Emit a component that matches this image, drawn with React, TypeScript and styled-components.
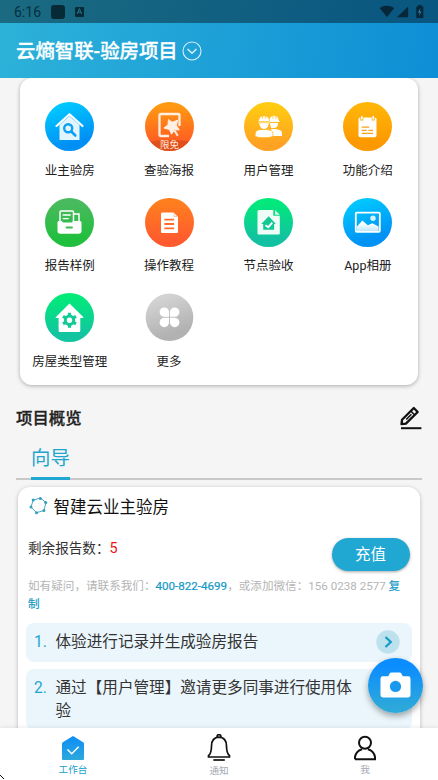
import React from 'react';
import styled, { createGlobalStyle } from 'styled-components';

const Global = createGlobalStyle`
  * { box-sizing: border-box; }
  html, body { margin: 0; padding: 0; overflow: hidden; }
  body { font-family: Roboto, "Noto Sans CJK SC", sans-serif; background: #f5f5f5; color: #222; }
  svg { display: block; flex: none; }
`;

const Screen = styled.div`
  position: relative;
  width: 438px;
  height: 780px;
  overflow: hidden;
  display: flex;
  flex-direction: column;
  background: #f5f5f5;
`;

const Top = styled.div`
  flex: none;
  background: linear-gradient(100deg, #2db2d9, #0e8ed5);
`;

const StatusBar = styled.div`
  height: 23px;
  display: flex;
  align-items: center;
  padding: 1px 14px 0;
  background: rgba(0, 0, 0, 0.4);
  color: #06303e;
  font-size: 14px;
  line-height: 22px;
  letter-spacing: 0;
`;

const Clock = styled.span`
  width: 37px;
`;

const StatusRight = styled.div`
  margin-left: auto;
`;

const Header = styled.header`
  height: 55px;
  padding: 1px 16px 0;
  display: flex;
  align-items: center;
  gap: 4px;
  color: #fff;
`;

const AppTitle = styled.h1`
  margin: 0;
  padding-top: 2px;
  font-size: 19.4px;
  font-weight: 500;
  line-height: 30px;
  -webkit-text-stroke: 0.3px currentColor;
`;

const Main = styled.main`
  flex: 1;
  min-height: 0;
  overflow: hidden;
`;

const ToolCard = styled.section`
  margin: 0 20.5px 0 20px;
  height: 307px;
  padding-top: 24px;
  background: #fff;
  border-radius: 12px;
  box-shadow: 0 1px 4px rgba(0, 0, 0, 0.3);
  display: grid;
  grid-template-columns: repeat(4, 1fr);
  grid-auto-rows: 95.7px;
`;

const Tool = styled.div`
  display: flex;
  flex-direction: column;
  align-items: center;
`;

const ToolLabel = styled.span`
  margin-top: 9.5px;
  font-size: 12.5px;
  line-height: 19px;
  white-space: nowrap;
  color: #222;
`;

const SectionHead = styled.div`
  margin: 20px 16px 0;
  height: 26px;
  display: flex;
  align-items: center;
  justify-content: space-between;
`;

const SectionTitle = styled.h2`
  margin: 0;
  padding-top: 1px;
  font-size: 16.4px;
  font-weight: 500;
  line-height: 24px;
  color: #222;
  -webkit-text-stroke: 0.3px currentColor;
`;

const Tabs = styled.div`
  margin: 0 16px;
  height: 49px;
  padding: 11px 15px 0;
  border-bottom: 2px solid #c8c8c8;
`;

const Tab = styled.div`
  width: 39px;
  height: 38px;
  padding-top: 1px;
  font-size: 19.4px;
  line-height: 31px;
  color: #20a5cf;
  border-bottom: 3px solid #20a8d2;
  white-space: nowrap;
`;

const ProjectCard = styled.section`
  margin: 7px 18.5px 0 18px;
  height: 300px;
  padding: 0 8px;
  background: #fff;
  border-radius: 12px;
  box-shadow: 0 1px 4px rgba(0, 0, 0, 0.25);
`;

const ProjectTitle = styled.div`
  display: flex;
  align-items: center;
  gap: 6px;
  height: 40px;
  padding-left: 2.5px;
  font-size: 16.5px;
  line-height: 24px;
  color: #111;
`;

const ProjectName = styled.span`
  padding-top: 2px;
`;

const Balance = styled.div`
  display: flex;
  align-items: flex-start;
  justify-content: space-between;
  height: 50px;
  padding: 11px 2px 0;
  font-size: 13.6px;
  line-height: 20px;
  color: #333;
`;

const Count = styled.span`
  font-size: 14.4px;
  color: #f01212;
`;

const Recharge = styled.button`
  width: 78px;
  height: 33px;
  padding: 1px 0 0;
  border: 0;
  border-radius: 17px;
  background: #20a8d2;
  color: #fff;
  font: 15.5px/33px Roboto, "Noto Sans CJK SC", sans-serif;
  box-shadow: 0 1px 3px rgba(0, 0, 0, 0.35);
`;

const Contact = styled.p`
  margin: 0;
  padding: 0 9px 0 2px;
  height: 46px;
  font-size: 11.6px;
  line-height: 18px;
  color: #b5b5b5;
`;

const Link = styled.span`
  color: #159ac5;
  -webkit-text-stroke: 0.2px currentColor;
`;

const Guide = styled.div`
  display: flex;
  align-items: flex-start;
  min-height: 39px;
  margin-bottom: 7px;
  padding: 8px 12px 7px 8px;
  border-radius: 8px;
  background: #eaf6fb;
  font-size: 15.6px;
  line-height: 23px;
  color: #333;
`;

const GuideNo = styled.span`
  flex: none;
  width: 21.5px;
  color: #20a5cf;
`;

const GuideText = styled.span`
  flex: none;
  width: 300px;
`;

const Chevron = styled.svg`
  margin: -1px 0 0 auto;
`;

const Fab = styled.button`
  position: absolute;
  left: 368px;
  top: 658px;
  width: 55px;
  height: 55px;
  padding: 0 0 1px;
  border: 0;
  border-radius: 50%;
  display: grid;
  place-items: center;
  background: linear-gradient(#0b8cff 12%, #2ca8da 88%);
  box-shadow: 0 3px 6px rgba(0, 0, 0, 0.35);
`;

const Nav = styled.nav`
  flex: none;
  height: 52px;
  display: grid;
  grid-template-columns: repeat(3, 1fr);
  background: #fff;
  box-shadow: 0 -1px 4px rgba(0, 0, 0, 0.08);
  z-index: 1;
`;

const NavItem = styled.div<{ $active?: boolean }>`
  display: flex;
  flex-direction: column;
  align-items: center;
  padding-top: 6px;
  font-size: 9.6px;
  line-height: 14px;
  color: ${(p) => (p.$active ? '#20a0cc' : '#a5a9b3')};
`;

const NavLabel = styled.span<{ $low?: boolean }>`
  margin-top: ${(p) => (p.$low ? 1.5 : 0.5)}px;
`;

const Pointer = styled.svg`
  position: absolute;
  left: 0;
  top: 775px;
  z-index: 2;
`;

type IconProps = { id: string; from: string; to: string; slant?: boolean; small?: boolean; children: React.ReactNode };

const Disc = ({ id, from, to, slant, small, children }: IconProps) => (
  <svg width="49" height="49" viewBox="0 0 49 49">
    <defs>
      <linearGradient id={id} x1={slant ? '.25' : '.5'} y1="0" x2={slant ? '.6' : '.5'} y2="1">
        <stop offset=".1" stopColor={from} />
        <stop offset=".85" stopColor={to} />
      </linearGradient>
      <linearGradient id={`${id}w`} x1="0" y1="0" x2="0" y2="1">
        <stop offset=".3" stopColor="#fff" />
        <stop offset="1" stopColor="#fff" stopOpacity=".75" />
      </linearGradient>
      <clipPath id={`${id}c`}>
        <circle cx="24.5" cy="24.5" r="24.5" />
      </clipPath>
    </defs>
    <circle cx="24.5" cy={small ? 24.3 : 24.5} r={small ? 23.8 : 24.5} fill={`url(#${id})`} />
    {children}
  </svg>
);

const tools = [
  {
    label: '业主验房',
    icon: (
      <Disc id="a" from="#00c6ff" to="#0090f5" slant>
        <path d="M14.5 23 24.5 14 34.5 23V38H14.5Z" fill="#e2f4fe" />
        <path d="M11.5 24 24.5 12.3 37.5 24" fill="none" stroke="#fff" strokeWidth="2.2" strokeLinecap="round" strokeLinejoin="round" />
        <circle cx="23.2" cy="26.3" r="4" fill="none" stroke="#0da0f4" strokeWidth="2.4" />
        <path d="m26.3 29.5 4 4" stroke="#0da0f4" strokeWidth="2.6" strokeLinecap="round" />
      </Disc>
    ),
  },
  {
    label: '查验海报',
    icon: (
      <Disc id="b" from="#ff9812" to="#ff5a24">
        <path d="M0 40Q24.5 36 49 40V49H0Z" fill="#d44e1a" opacity=".75" clipPath="url(#bc)" />
        <path d="M24 34H16Q14.5 34 14.5 32.5V13.5Q14.5 12 16 12H33Q34.5 12 34.5 13.5V24" fill="none" stroke="#ffefe3" strokeWidth="2.3" />
        <path d="m23.5 17.5 3.7 2.8 5.3-2-1.1 5.2 2.9 4.4-4.9-.1-2.8 4.4-2.2-4.8-5.5-1.4 4.1-3.1Z" fill="#fff0e6" stroke="#fff0e6" strokeWidth="1" strokeLinejoin="round" />
        <path d="m29.5 28.5 3.2 5.3" stroke="#fff0e6" strokeWidth="2" />
        <text x="24.5" y="46.3" textAnchor="middle" fontSize="9.5" fill="#ffe6d6">限免</text>
      </Disc>
    ),
  },
  {
    label: '用户管理',
    icon: (
      <Disc id="c" from="#ffca12" to="#ffa223">
        <g fill="#fff">
          <path d="M25 18.5Q26 14 30 13.8 34.3 14 34.8 18.5L36 20H25Z" />
          <path d="M26 21H34Q34 25.5 30.5 26H27Z" />
          <path d="M27 27H31Q38 27.5 38 31V34H27Z" />
          <path d="M14.5 19.5Q14.5 14 20 13.8 25.5 14 25.5 19.5Z" stroke="#ffbd17" strokeWidth=".7" />
          <path d="M14 19.8H26V21H14Z" />
          <path d="M15.3 21H24.8Q24.6 26.6 20 27 15.6 26.6 15.3 21Z" />
          <path d="M11.2 33.5V31.5Q11.5 27.5 18 27.5H22Q28.8 27.5 29 31.5V33.5Q28.8 35.7 20 35.7 11.4 35.7 11.2 33.5Z" stroke="#ffb41e" strokeWidth=".8" />
        </g>
        <path d="M14 20.7h11.8M26 20.5h9.5M18.4 14v3M21.8 14v3M29 14v3M31.8 14v3" stroke="#ffbb18" strokeWidth=".7" />
      </Disc>
    ),
  },
  {
    label: '功能介绍',
    icon: (
      <Disc id="d" from="#ffb408" to="#fc9800">
        <rect x="15.5" y="15.6" width="18" height="19.6" rx="1.7" fill="#fff" />
        <path d="M18.8 14.5v4M30.2 14.5v4" stroke="#ffae08" strokeWidth="3" />
        <path d="M18.8 14v3.6M30.2 14v3.6" stroke="#fff" strokeWidth="1.6" />
        <path d="M18.7 25.2h7.5M18.7 28.3h5M25.5 28.3h4.5M18.7 31.4h11.4" stroke="#f8a119" strokeWidth="1.3" />
      </Disc>
    ),
  },
  {
    label: '报告样例',
    icon: (
      <Disc id="e" from="#4aba5e" to="#20bf3d">
        <path d="M15 24V14Q15 13 16 13H27.5Q28.5 13 28.5 14V24M29 16H34V25" fill="none" stroke="#fff" strokeWidth="1.5" />
        <path d="M17.7 17h8M17.7 20.7h6" stroke="#fff" strokeWidth="1.3" />
        <path d="M13.5 23H17L18 24.5H27L28 23H35Q36.5 23 36.5 24.7V33Q36.5 35.8 33.5 35.8H15.5Q12.5 35.8 12.5 33V24.5Q12.5 23 13.5 23Z" fill="#fff" />
        <path d="M21.5 29.5H27" stroke="#3cbe51" strokeWidth="1.8" strokeLinecap="round" />
      </Disc>
    ),
  },
  {
    label: '操作教程',
    icon: (
      <Disc id="f" from="#ff7e1e" to="#ff5b2e">
        <path d="M17 14.5H28.5L33 18.7V34Q33 35 32 35H17Q16 35 16 34V15.5Q16 14.5 17 14.5Z" fill="#fff" />
        <path d="M29 14.8V18.5H32.8" stroke="#ffb48e" strokeWidth=".8" fill="none" />
        <path d="M19.3 21.7h9.8M19.3 26h9.8M19.3 30.4h9.8" stroke="#ff6d2a" strokeWidth="1.8" />
      </Disc>
    ),
  },
  {
    label: '节点验收',
    icon: (
      <Disc id="g" from="#02e97b" to="#13c0a2">
        <path d="M15 12H29.3V17.7H35.8V35.5Q35.8 36.5 34.8 36.5H14.5Q13.5 36.5 13.5 35.5V13.5Q13.5 12 15 12Z" fill="#effdf7" />
        <path d="M31 12v4.8h4.8Z" fill="#d6faeb" />
        <path d="m17.2 26 7.5-7.8 7.2 7.8h-1.8v5.8H19.2V26Z" fill="#12c995" />
        <path d="m21.5 27.2 2.8 2 4-4.6" fill="none" stroke="#fff" strokeWidth="1.8" />
      </Disc>
    ),
  },
  {
    label: 'App相册',
    icon: (
      <Disc id="h" from="#00c6ff" to="#0092f4" slant>
        <rect x="12.8" y="14.6" width="24" height="19.2" rx="1" fill="none" stroke="#fff" strokeWidth="1.8" />
        <circle cx="30" cy="20.3" r="2.7" fill="#d5f3ff" />
        <path d="m14 28.5 5.3-6 5.5 4.8 4.5-2 6.3 3.2v4.5H14Z" fill="url(#hw)" />
      </Disc>
    ),
  },
  {
    label: '房屋类型管理',
    icon: (
      <Disc id="i" from="#03e97a" to="#12c4a0">
        <path d="M24.5 10.6 38.5 24.2Q38.9 25 37.5 25H35.3V37.5Q35.3 39 34 39H15Q13.6 39 13.6 37.5V25H11.3Q10 25 10.7 24.2Z" fill="#fff" />
        <g stroke="#12cb95" fill="none">
          <circle cx="24.5" cy="27.2" r="4.2" strokeWidth="3" />
          <path d="M24.5 19.7v3M24.5 31.7v3M18 23.45l2.6 1.5M28.4 29.45l2.6 1.5M18 30.95l2.6-1.5M28.4 24.95l2.6-1.5" strokeWidth="3.2" />
        </g>
      </Disc>
    ),
  },
  {
    label: '更多',
    icon: (
      <Disc id="j" from="#d3d3d3" to="#b2b2b2" slant small>
        <g fill="#fff">
          <path d="M24 23.8H19.3A4.7 4.7 0 1 1 24 19.1Z" />
          <path d="M25 23.8H29.7A4.7 4.7 0 1 0 25 19.1Z" />
          <path d="M24 24.8H19.3A4.7 4.7 0 1 0 24 29.5Z" />
          <path d="M25 24.8H29.7A4.7 4.7 0 1 1 25 29.5Z" />
        </g>
      </Disc>
    ),
  },
];

export default function App() {
  return (
    <>
      <Global />
      <Screen>
        <Top>
          <StatusBar>
            <Clock>6:16</Clock>
            <svg width="34" height="16" viewBox="0 0 34 16">
              <rect x="0" y="1" width="14" height="14" rx="3" fill="#072b36" />
              <rect x="24" y="3" width="9" height="10" rx="1" fill="#072b36" />
              <path d="m26.2 10 2.2-5.3 2.2 5.3M27 8.2h2.8" stroke="#257894" fill="none" />
            </svg>
            <StatusRight>
              <svg width="45" height="16" viewBox="0 0 45 16" fill="#06263a">
                <path d="M.5 4Q7.6-.6 15.3 4L8 13Z" />
                <path d="M18 13.3 29.2 2.5V13.3Z" />
                <path d="M37.3 2.4H39V1h3.6v1.4h1.7V14H37.3Z" />
                <path d="m41.5 4-2.7 4.5h1.7L40 12l2.7-4.5H41Z" fill="#2e779d" />
              </svg>
            </StatusRight>
          </StatusBar>
          <Header>
            <AppTitle>云熵智联-验房项目</AppTitle>
            <svg width="20" height="20" viewBox="0 0 20 20" fill="none" stroke="#d9f0fa">
              <circle cx="10" cy="10" r="9" strokeWidth="1.1" />
              <path d="m5.5 8 4.5 4.3L14.5 8" strokeWidth="1.5" />
            </svg>
          </Header>
        </Top>
        <Main>
          <ToolCard>
            {tools.map((t) => (
              <Tool key={t.label}>
                {t.icon}
                <ToolLabel>{t.label}</ToolLabel>
              </Tool>
            ))}
          </ToolCard>
          <SectionHead>
            <SectionTitle>项目概览</SectionTitle>
            <svg width="22" height="24" viewBox="0 0 22 24" fill="none" stroke="#111">
              <path d="M1.5 18.2 2 13.8 13.8 2 17.7 6 5.9 17.6Z" strokeWidth="2.3" strokeLinejoin="round" />
              <path d="m10.8 5 3.9 4M6.2 13.5l5.2-5.2" strokeWidth="1.6" />
              <path d="M1 22.2h20.4" strokeWidth="2" />
            </svg>
          </SectionHead>
          <Tabs>
            <Tab>向导</Tab>
          </Tabs>
          <ProjectCard>
            <ProjectTitle>
              <svg width="19" height="21" viewBox="0 1 19 21" fill="#329fbd" stroke="#329fbd">
                <path d="M4.2 4.1 11.4 2 17 6.6 14.9 14.5 7.5 16.7 2 11Z" fill="none" strokeWidth=".9" />
                <g stroke="none">
                  <circle cx="4.2" cy="4.1" r="1.5" />
                  <circle cx="11.4" cy="2.5" r="1.5" />
                  <circle cx="16.7" cy="6.6" r="1.5" />
                  <circle cx="14.9" cy="14.5" r="1.5" />
                  <circle cx="7.5" cy="16.7" r="1.5" />
                  <circle cx="2" cy="11" r="1.5" />
                </g>
              </svg>
              <ProjectName>智建云业主验房</ProjectName>
            </ProjectTitle>
            <Balance>
              <span>剩余报告数：<Count>5</Count></span>
              <Recharge>充值</Recharge>
            </Balance>
            <Contact>
              如有疑问，请联系我们：<Link>400-822-4699</Link>，或添加微信：156 0238 2577 <Link>复制</Link>
            </Contact>
            <Guide>
              <GuideNo>1.</GuideNo>
              <GuideText>体验进行记录并生成验房报告</GuideText>
              <Chevron width="24" height="24" viewBox="0 0 24 24">
                <circle cx="12" cy="12" r="11.7" fill="#bde2ee" />
                <path d="m9.5 7 5.3 5-5.3 5" fill="none" stroke="#159ac5" strokeWidth="2.2" />
              </Chevron>
            </Guide>
            <Guide>
              <GuideNo>2.</GuideNo>
              <GuideText>通过【用户管理】邀请更多同事进行使用体验</GuideText>
            </Guide>
          </ProjectCard>
        </Main>
        <Nav>
          <NavItem $active>
            <svg width="24" height="28" viewBox="0 0 24 28">
              <defs>
                <linearGradient id="home" x1="0" y1="0" x2="0" y2="1">
                  <stop stopColor="#0c8df8" />
                  <stop offset="1" stopColor="#2da8db" />
                </linearGradient>
              </defs>
              <path d="M12 2 22.2 8.2Q23 8.7 23 9.7V25Q23 26 22 26H2Q1 26 1 25V9.7Q1 8.7 1.8 8.2Z" fill="url(#home)" />
              <path d="m6.5 15.5 4.2 4.2 7-7" fill="none" stroke="#fff" strokeWidth="1.5" />
            </svg>
            <NavLabel>工作台</NavLabel>
          </NavItem>
          <NavItem>
            <svg width="24" height="28" viewBox="0 0 24 28" fill="none" stroke="#111" strokeWidth="1.7">
              <circle cx="12" cy="2.5" r="1.9" />
              <path d="M12 3.2C7.2 3.4 4.6 7 4.5 12 4.5 18 3.5 20 1.5 21.7V23H22.5V21.7C20.5 20 19.5 18 19.5 12 19.4 7 16.8 3.4 12 3.2Z" fill="#fff" />
              <path d="M6.3 26h11.5" />
            </svg>
            <NavLabel $low>通知</NavLabel>
          </NavItem>
          <NavItem>
            <svg width="24" height="28" viewBox="0 0 24 28" fill="none" stroke="#111" strokeWidth="2">
              <circle cx="12" cy="8.8" r="6" />
              <path d="M2 25.2V23Q3 17 9 15.2M15 15.2Q21 17 22 23V25.2H2" />
            </svg>
            <NavLabel>我</NavLabel>
          </NavItem>
        </Nav>
        <Fab aria-label="拍照">
          <svg width="31" height="26" viewBox="0 0.5 32 27" preserveAspectRatio="none">
            <path d="M3 5H8.5L10 2Q10.5 1 11.7 1H20.3Q21.5 1 22 2L23.5 5H29Q31.5 5 31.5 7.5V24.5Q31.5 27 29 27H3Q.5 27 .5 24.5V7.5Q.5 5 3 5Z" fill="#fff" />
            <circle cx="16" cy="15.5" r="5.8" fill="#1999ee" />
          </svg>
        </Fab>
        <Pointer width="5" height="5" viewBox="0 0 5 5">
          <path d="M0 0h1v1h1v1h1v1h1v1h-1v-1h-1v-1h-1v-1h-1Z" fill="#111" />
        </Pointer>
      </Screen>
    </>
  );
}
